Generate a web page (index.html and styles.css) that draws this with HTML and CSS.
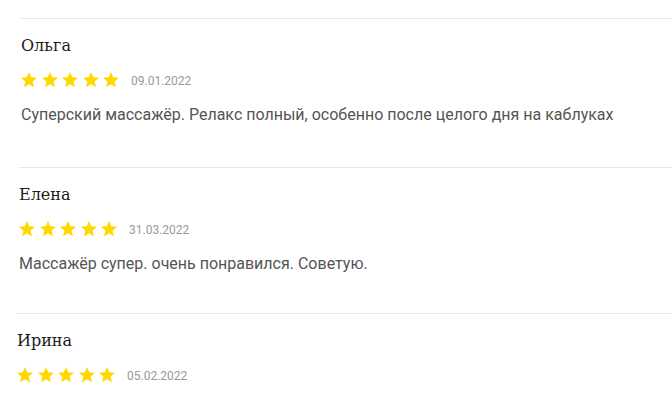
FILE: index.html
```html
<!DOCTYPE html>
<html lang="ru">
<head>
<meta charset="utf-8">
<link rel="stylesheet" href="styles.css">
</head>
<body>
<div class="reviews">
  <div class="review">
    <div class="name">Ольга</div>
    <div class="meta">
      <div class="stars">
        <svg class="star" viewBox="2 2 20 20"><path d="M12 17.27L18.18 21l-1.64-7.03L22 9.24l-7.19-.61L12 2 9.19 8.63 2 9.24l5.46 4.73L5.82 21z"/></svg>
        <svg class="star" viewBox="2 2 20 20"><path d="M12 17.27L18.18 21l-1.64-7.03L22 9.24l-7.19-.61L12 2 9.19 8.63 2 9.24l5.46 4.73L5.82 21z"/></svg>
        <svg class="star" viewBox="2 2 20 20"><path d="M12 17.27L18.18 21l-1.64-7.03L22 9.24l-7.19-.61L12 2 9.19 8.63 2 9.24l5.46 4.73L5.82 21z"/></svg>
        <svg class="star" viewBox="2 2 20 20"><path d="M12 17.27L18.18 21l-1.64-7.03L22 9.24l-7.19-.61L12 2 9.19 8.63 2 9.24l5.46 4.73L5.82 21z"/></svg>
        <svg class="star" viewBox="2 2 20 20"><path d="M12 17.27L18.18 21l-1.64-7.03L22 9.24l-7.19-.61L12 2 9.19 8.63 2 9.24l5.46 4.73L5.82 21z"/></svg>
      </div>
      <span class="date">09.01.2022</span>
    </div>
    <p class="text">Суперский массажёр. Релакс полный, особенно после целого дня на каблуках</p>
  </div>
  <div class="review">
    <div class="name">Елена</div>
    <div class="meta">
      <div class="stars">
        <svg class="star" viewBox="2 2 20 20"><path d="M12 17.27L18.18 21l-1.64-7.03L22 9.24l-7.19-.61L12 2 9.19 8.63 2 9.24l5.46 4.73L5.82 21z"/></svg>
        <svg class="star" viewBox="2 2 20 20"><path d="M12 17.27L18.18 21l-1.64-7.03L22 9.24l-7.19-.61L12 2 9.19 8.63 2 9.24l5.46 4.73L5.82 21z"/></svg>
        <svg class="star" viewBox="2 2 20 20"><path d="M12 17.27L18.18 21l-1.64-7.03L22 9.24l-7.19-.61L12 2 9.19 8.63 2 9.24l5.46 4.73L5.82 21z"/></svg>
        <svg class="star" viewBox="2 2 20 20"><path d="M12 17.27L18.18 21l-1.64-7.03L22 9.24l-7.19-.61L12 2 9.19 8.63 2 9.24l5.46 4.73L5.82 21z"/></svg>
        <svg class="star" viewBox="2 2 20 20"><path d="M12 17.27L18.18 21l-1.64-7.03L22 9.24l-7.19-.61L12 2 9.19 8.63 2 9.24l5.46 4.73L5.82 21z"/></svg>
      </div>
      <span class="date">31.03.2022</span>
    </div>
    <p class="text">Массажёр супер. очень понравился. Советую.</p>
  </div>
  <div class="review">
    <div class="name">Ирина</div>
    <div class="meta">
      <div class="stars">
        <svg class="star" viewBox="2 2 20 20"><path d="M12 17.27L18.18 21l-1.64-7.03L22 9.24l-7.19-.61L12 2 9.19 8.63 2 9.24l5.46 4.73L5.82 21z"/></svg>
        <svg class="star" viewBox="2 2 20 20"><path d="M12 17.27L18.18 21l-1.64-7.03L22 9.24l-7.19-.61L12 2 9.19 8.63 2 9.24l5.46 4.73L5.82 21z"/></svg>
        <svg class="star" viewBox="2 2 20 20"><path d="M12 17.27L18.18 21l-1.64-7.03L22 9.24l-7.19-.61L12 2 9.19 8.63 2 9.24l5.46 4.73L5.82 21z"/></svg>
        <svg class="star" viewBox="2 2 20 20"><path d="M12 17.27L18.18 21l-1.64-7.03L22 9.24l-7.19-.61L12 2 9.19 8.63 2 9.24l5.46 4.73L5.82 21z"/></svg>
        <svg class="star" viewBox="2 2 20 20"><path d="M12 17.27L18.18 21l-1.64-7.03L22 9.24l-7.19-.61L12 2 9.19 8.63 2 9.24l5.46 4.73L5.82 21z"/></svg>
      </div>
      <span class="date">05.02.2022</span>
    </div>
  </div>
</div>
</body>
</html>
```
FILE: styles.css
```css
html, body {
  margin: 0;
  padding: 0;
  background: #fff;
  overflow: hidden;
}
.reviews {
  padding-top: 18px;
  padding-left: 21px;
}
.review {
  border-top: 1px solid #e6e6e6;
  padding: 17px 0 40px 0;
}
.review:nth-child(1) {
  padding-bottom: 41px;
}
.review:nth-child(2) {
  margin-left: -2px;
  padding-bottom: 38px;
}
.review:nth-child(3) {
  margin-left: -4px;
}
.name {
  font-family: "DejaVu Serif", serif;
  font-size: 16px;
  line-height: 20px;
  color: #1a1a1a;
}
.meta {
  display: flex;
  align-items: center;
  margin-top: 15px;
  height: 18px;
}
.stars {
  display: flex;
  gap: 4.5px;
}
.star {
  width: 16px;
  height: 16px;
  fill: #ffd800;
  display: block;
}
.date {
  font-family: Roboto, "Liberation Sans", sans-serif;
  font-size: 12px;
  color: #999;
  margin-left: 12px;
  margin-top: 2px;
}
.text {
  margin: 15px 0 0 0;
  font-family: Roboto, "Liberation Sans", sans-serif;
  font-size: 16px;
  line-height: 22px;
  color: #555;
}
```
